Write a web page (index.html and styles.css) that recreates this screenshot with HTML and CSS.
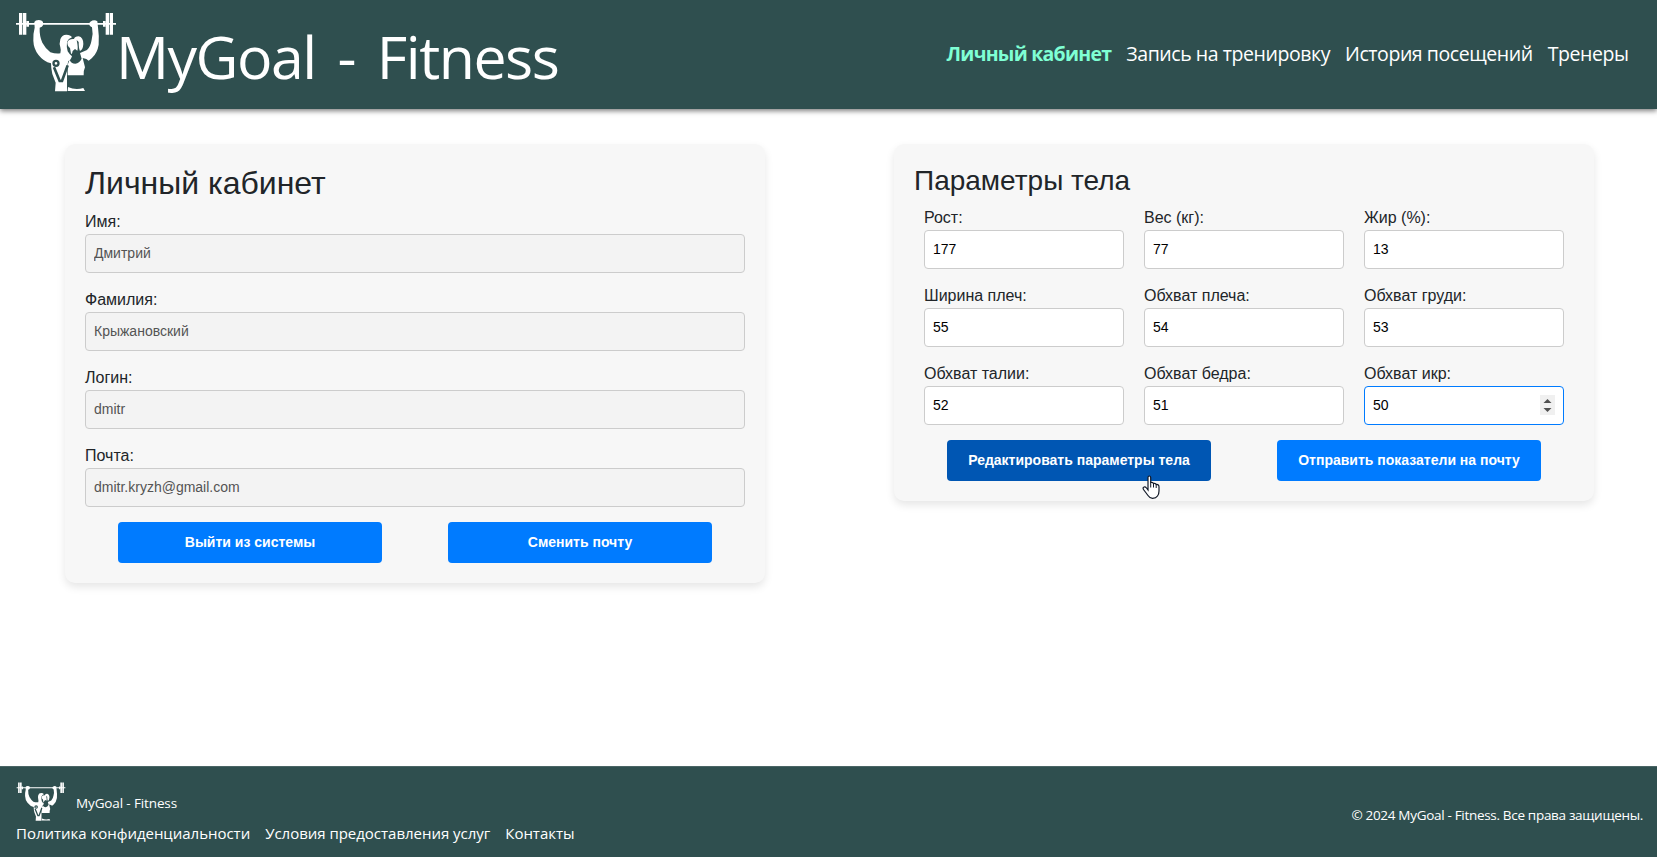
FILE: index.html
```html
<!DOCTYPE html>
<html lang="ru">
<head>
<meta charset="utf-8">
<title>MyGoal - Fitness</title>
<link rel="stylesheet" href="styles.css">
</head>
<body>
<svg class="defs" width="0" height="0">
  <symbol id="logo" viewBox="45 36 306 240">
    <g fill="currentColor">
      <path d="M48 69H348V74H48Z"/>
      <path d="M57 39h10v65H57zM69 39h10v65H69zM317 39h10v65h-10zM329 39h10v65h-10z"/>
      <path d="M79 63h8v17h-8zM309 63h8v17h-8z"/>
      <path d="M103 66Q106 60 116 60Q128 61 129 67V76Q127 82 119 83Q118 108 127 128Q137 146 151 157Q167 162 181 160Q184 152 181 142Q177 132 181 118Q185 104 199 104Q212 104 216 112Q205 116 201 125Q199 139 203 154Q209 164 216 169Q212 181 205 183L201 200V274H165L167 248L157 222Q153 205 153 190Q131 185 115 164Q101 146 100 122Q99 101 104 83Z"/>
      <path d="M202 126Q207 116 222 117Q224 109 236 109Q250 112 250 132Q249 149 240 153Q236 146 236 126L230 120Q235 144 232 152L225 147L218 153Q216 165 213 161L210 144Q202 140 202 126Z"/>
      <path d="M271 65Q283 57 292 64L294 82Q298 111 296 134Q292 159 276 174L266 182L259 177L248 174L255 202Q250 212 251 226H203V194L209 179Q213 191 226 191Q238 190 245 176L240 159L261 150Q272 139 275 119Q280 102 276 82Q266 78 268 69Z"/>
      <path d="M204 261Q226 271 250 264L255 273H203Z"/>
    </g>
    <path d="M162 202L179 243H186L203 196" fill="none" stroke="#2f4f4f" stroke-width="8"/>
    <circle cx="168" cy="190" r="7.500" fill="#fff" stroke="#2f4f4f" stroke-width="7"/>
  </symbol>
</svg>
<header class="header">
  <a class="brand"><svg class="brand-logo"><use href="#logo"/></svg><span class="brand-name">MyGoal - Fitness</span></a>
  <nav class="nav">
    <a class="nav-link active">Личный кабинет</a>
    <a class="nav-link">Запись на тренировку</a>
    <a class="nav-link">История посещений</a>
    <a class="nav-link">Тренеры</a>
  </nav>
</header>
<main class="content">
  <section class="card profile">
    <h2 class="title">Личный кабинет</h2>
    <div class="field"><label>Имя:</label><input class="input" value="Дмитрий" disabled></div>
    <div class="field"><label>Фамилия:</label><input class="input" value="Крыжановский" disabled></div>
    <div class="field"><label>Логин:</label><input class="input" value="dmitr" disabled></div>
    <div class="field"><label>Почта:</label><input class="input" value="dmitr.kryzh@gmail.com" disabled></div>
    <div class="actions"><button class="btn">Выйти из системы</button><button class="btn">Сменить почту</button></div>
  </section>
  <section class="card">
    <h3 class="title title-small">Параметры тела</h3>
    <div class="grid">
      <div class="field"><label>Рост:</label><input class="input" value="177"></div>
      <div class="field"><label>Вес (кг):</label><input class="input" value="77"></div>
      <div class="field"><label>Жир (%):</label><input class="input" value="13"></div>
      <div class="field"><label>Ширина плеч:</label><input class="input" value="55"></div>
      <div class="field"><label>Обхват плеча:</label><input class="input" value="54"></div>
      <div class="field"><label>Обхват груди:</label><input class="input" value="53"></div>
      <div class="field"><label>Обхват талии:</label><input class="input" value="52"></div>
      <div class="field"><label>Обхват бедра:</label><input class="input" value="51"></div>
      <div class="field"><label>Обхват икр:</label>
        <div class="stepper"><input class="input focused" value="50"><svg class="spin" viewBox="0 0 15 20"><path fill="#f0f0f0" d="M0 0h15v20H0z"/><path fill="#505050" d="M3.500 8L7.500 4l4 4zM3.500 13l4 4 4-4z"/></svg></div></div>
    </div>
    <div class="actions">
      <button class="btn hovered">Редактировать параметры тела
        <svg class="cursor" viewBox="0 0 18 24"><path d="M6 14V2.500Q6 1 7.300 1T8.700 2.500V7.500Q11 7 11.500 8.500Q13.700 8 14.200 9.500Q17 9.200 17 12V16Q17 19 15.500 21Q14 23.300 10.500 23.300Q7.500 23 6 20.500L1.500 14.500Q.5 12.500 2 12Q3.300 11.500 4.500 13L6 15Z" fill="#fff" stroke="#111827" stroke-width="1.200"/><path d="M8.700 7.500v5M11.500 8.500v4M14.200 9.500v3.500" stroke="#111827" fill="none"/></svg>
      </button>
      <button class="btn">Отправить показатели на почту</button>
    </div>
  </section>
</main>
<footer class="footer">
  <div class="footer-left">
    <div class="footer-brand"><svg class="footer-logo"><use href="#logo"/></svg><span class="footer-name">MyGoal - Fitness</span></div>
    <div class="footer-links"><a>Политика конфиденциальности</a><a>Условия предоставления услуг</a><a>Контакты</a></div>
  </div>
  <div class="copyright">© 2024 MyGoal - Fitness. Все права защищены.</div>
</footer>
</body>
</html>
```
FILE: styles.css
```css
* { box-sizing: border-box; }
body {
  margin: 0;
  height: 857px;
  display: flex;
  flex-direction: column;
  overflow: hidden;
  background: #fff;
  color: #212529;
  font: 16px/24px "Liberation Sans", Arial, sans-serif;
}
.defs { position: absolute; }
.header {
  height: 109px;
  padding: 0 28.5px 0 15px;
  display: flex;
  justify-content: space-between;
  align-items: flex-start;
  background: #2f4f4f;
  color: #fff;
  box-shadow: 0 2px 5px rgba(0, 0, 0, .5);
  font-family: "Open Sans", "Segoe UI", sans-serif;
}
.brand { display: flex; padding-top: 12px; }
.brand-logo { width: 102px; height: 80px; }
.brand-name {
  margin-left: -1px;
  font-size: 59px;
  line-height: 88px;
  letter-spacing: -1.5px;
  word-spacing: 8px;
  white-space: nowrap;
}
.nav { display: flex; gap: 15px; padding-top: 39px; }
.nav-link { font-size: 19.5px; line-height: 30px; letter-spacing: -.43px; white-space: nowrap; }
.nav-link.active { color: #7fffd4; font-weight: 700; letter-spacing: -.75px; }
.content {
  flex: 1;
  display: flex;
  justify-content: space-between;
  align-items: flex-start;
  padding: 35px 63px 0 65px;
}
.card {
  width: 700px;
  padding: 20px;
  background: #f7f7f7;
  border-radius: 10px;
  box-shadow: 0 4px 8px rgba(0, 0, 0, .1);
}
.title { margin: 0 0 7.6px; font-size: 32px; line-height: 38.4px; font-weight: 400; }
.title-small { margin-bottom: 8px; font-size: 28px; line-height: 33.6px; }
.field { margin-bottom: 15px; }
.field label { display: block; }
.input {
  display: block;
  width: 100%;
  height: 39px;
  padding: 8px;
  border: 1px solid #ccc;
  border-radius: 4px;
  background: #fff;
  color: #000;
  font: 14px "Liberation Sans", Arial, sans-serif;
}
.input:disabled { padding-bottom: 10px; background: #f3f3f3; color: #545454; }
.input.focused { border-color: #007bff; }
.grid { display: grid; grid-template-columns: repeat(3, 200px); column-gap: 20px; padding-left: 10px; }
.stepper { position: relative; }
.spin { position: absolute; right: 9px; top: 9px; width: 15px; height: 20px; }
.actions { display: flex; justify-content: space-around; }
.btn {
  position: relative;
  width: 40%;
  height: 41px;
  padding: 0;
  border: 0;
  border-radius: 4px;
  background: #007bff;
  color: #fff;
  font: 700 14px "Liberation Sans", Arial, sans-serif;
}
.profile .btn { padding-bottom: 2px; }
.btn.hovered { background: #0056b3; }
.cursor { position: absolute; left: 195px; top: 35px; width: 18px; height: 24px; }
.footer {
  height: 91px;
  display: flex;
  justify-content: space-between;
  padding: 0 14px 0 16px;
  background: #2f4f4f;
  border-top: 1px solid #4a6565;
  color: #fff;
  font-family: "Open Sans", "Segoe UI", sans-serif;
}
.footer-left { padding-top: 15px; }
.footer-brand { display: flex; height: 39px; }
.footer-logo { width: 50px; height: 39px; }
.footer-name { margin-left: 10px; padding-top: 9px; font-size: 13.5px; line-height: 24px; letter-spacing: -.13px; }
.footer-links { display: flex; gap: 15px; font-size: 15px; line-height: 24px; letter-spacing: -.02px; white-space: nowrap; }
.copyright { padding-top: 36px; font-size: 13.5px; line-height: 24px; letter-spacing: -.31px; }
```
